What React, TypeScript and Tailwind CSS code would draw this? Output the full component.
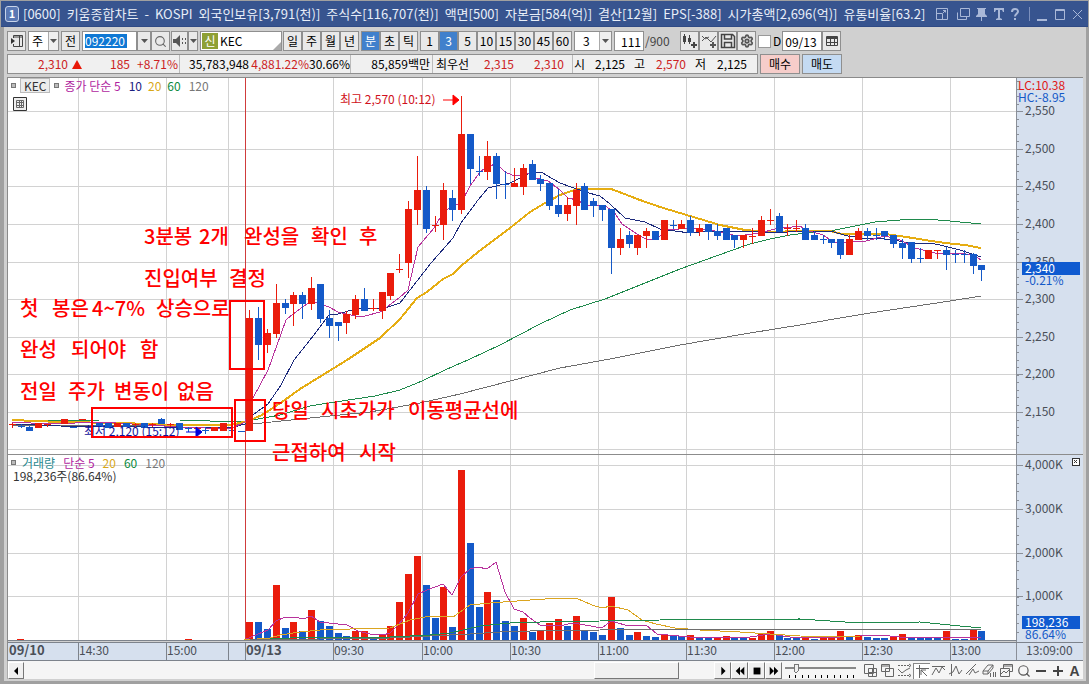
import React from 'react';
import { Search, Settings } from 'lucide-react';

type Point = [number, number];
type Candle = ['r' | 'b', number, number, number, number];

const RED = '#ea1c0c';
const BLUE = '#1459c8';

const titleParts = [
  '[0600]',
  '키움종합차트',
  '-',
  'KOSPI',
  '외국인보유[3,791(천)]',
  '주식수[116,707(천)]',
  '액면[500]',
  '자본금[584(억)]',
  '결산[12월]',
  'EPS[-388]',
  '시가총액[2,696(억)]',
  '유통비율[63.2]',
];

// [colour, high, body top, body bottom, low], one per 3 minutes from 09:00
const candles: Candle[] = [
  ['r', 310, 318, 431, 431], ['b', 307, 318, 345, 360], ['r', 329, 333, 345, 353], ['r', 284, 303, 334, 338],
  ['b', 299, 303, 308, 314], ['r', 292, 295, 304, 326], ['b', 292, 295, 304, 319], ['r', 277, 288, 304, 310],
  ['b', 284, 284, 319, 323], ['b', 310, 318, 326, 338], ['b', 322, 322, 326, 341], ['r', 311, 314, 323, 334],
  ['r', 295, 299, 315, 319], ['b', 288, 299, 311, 311], ['r', 299, 308, 308, 311], ['r', 292, 292, 311, 319],
  ['r', 273, 273, 296, 300], ['r', 254, 269, 269, 273], ['r', 201, 209, 263, 278], ['r', 156, 190, 210, 225],
  ['b', 186, 190, 229, 233], ['r', 216, 225, 225, 232], ['r', 183, 190, 225, 240], ['b', 190, 198, 210, 221],
  ['r', 96, 134, 210, 214], ['b', 134, 134, 169, 184], ['b', 156, 171, 171, 176], ['r', 141, 156, 172, 180],
  ['b', 153, 156, 184, 199], ['b', 171, 184, 184, 199], ['r', 168, 183, 187, 187], ['r', 164, 168, 187, 195],
  ['b', 160, 164, 180, 180], ['b', 175, 179, 184, 191], ['b', 183, 183, 206, 210], ['b', 189, 205, 214, 217],
  ['r', 197, 205, 214, 221], ['r', 183, 190, 206, 225], ['b', 183, 186, 210, 210], ['b', 198, 201, 206, 217],
  ['b', 205, 205, 210, 221], ['b', 209, 209, 248, 274], ['r', 228, 239, 248, 255], ['b', 231, 235, 244, 248],
  ['r', 235, 235, 248, 255], ['r', 228, 231, 236, 248], ['b', 231, 231, 240, 240], ['r', 220, 220, 240, 240],
  ['b', 220, 225, 225, 229], ['r', 220, 224, 229, 229], ['b', 216, 220, 233, 236], ['r', 224, 228, 232, 236],
  ['b', 224, 224, 232, 240], ['b', 224, 231, 236, 240], ['b', 228, 228, 240, 240], ['b', 235, 235, 240, 248],
  ['r', 235, 235, 240, 248], ['r', 228, 236, 236, 244], ['r', 216, 220, 236, 236], ['r', 209, 220, 220, 225],
  ['b', 213, 216, 232, 232], ['r', 224, 228, 228, 236], ['r', 220, 228, 228, 232], ['b', 224, 228, 240, 240],
  ['b', 231, 235, 240, 240], ['b', 235, 239, 239, 244], ['b', 239, 239, 243, 248], ['b', 239, 239, 255, 259],
  ['r', 235, 239, 255, 255], ['r', 228, 231, 240, 240], ['b', 228, 231, 236, 240], ['b', 228, 235, 235, 240],
  ['b', 231, 231, 236, 240], ['b', 235, 235, 244, 248], ['b', 239, 243, 248, 259], ['b', 242, 242, 259, 263],
  ['b', 248, 258, 258, 263], ['r', 250, 250, 259, 259], ['r', 250, 250, 250, 259], ['b', 247, 250, 255, 270],
  ['b', 250, 254, 254, 263], ['b', 250, 254, 254, 263], ['b', 253, 254, 266, 274], ['b', 265, 265, 270, 281],
];

// previous session, x then the same fields
const priorCandles: [number, Candle][] = [
  [12, ['r', 423, 424, 424, 428]], [21, ['b', 424, 426, 426, 428]], [29, ['b', 426, 427, 431, 431]],
  [38, ['r', 423, 423, 428, 428]], [47, ['r', 424, 424, 424, 427]], [64, ['r', 419, 419, 424, 424]],
  [73, ['b', 427, 427, 427, 427]], [82, ['r', 419, 419, 419, 419]], [99, ['b', 423, 423, 427, 427]],
  [108, ['b', 423, 423, 428, 428]], [117, ['r', 423, 423, 427, 427]], [126, ['b', 423, 423, 427, 427]],
  [135, ['r', 423, 424, 424, 427]], [144, ['b', 423, 423, 428, 428]], [152, ['r', 423, 424, 424, 427]],
  [161, ['b', 418, 419, 424, 424]], [170, ['r', 423, 424, 424, 427]], [179, ['b', 423, 423, 430, 430]],
  [188, ['b', 427, 428, 428, 432]], [197, ['r', 427, 428, 428, 431]], [205, ['b', 427, 430, 430, 434]],
  [214, ['r', 427, 427, 431, 431]], [223, ['r', 423, 423, 431, 431]], [232, ['b', 430, 430, 430, 430]],
  [241, ['b', 431, 431, 431, 431]],
];

const volumeTops = [
  622, 622, 629, 585, 628, 622, 631, 610, 621, 626, 633, 636, 631, 631, 638, 635, 626, 602, 574, 556, 585, 618, 587,
  627, 470, 543, 607, 592, 600, 621, 626, 618, 632, 630, 623, 619, 626, 616, 630, 632, 635, 597, 628, 635, 632, 636,
  637, 634, 635, 636, 635, 638, 638, 637, 636, 638, 638, 638, 634, 631, 635, 638, 638, 636, 639, 638, 638, 631, 637,
  635, 637, 638, 638, 637, 634, 637, 637, 637, 638, 631, 639, 639, 630, 631,
];
const volumeColors =
  'rbbrbrbrbbbbrrbrrrrrbbrbrbbrbbbrb' + 'rrrbrbbbrbbrbbrbbrbbrrbbrrrbbbrbrrrbrbbbrrbbbbrbbrb';

const priceLines: { color: string; width: number; points: Point[] }[] = [
  {
    color: '#6e6e6e',
    width: 1,
    points: [[12, 425], [230, 425], [262, 423], [310, 418], [370, 412], [420, 403], [460, 394], [510, 381], [560, 368], [610, 359], [680, 345], [750, 333], [800, 325], [834, 319], [870, 313], [910, 307], [950, 301], [981, 296]],
  },
  {
    color: '#1f8a4c',
    width: 1,
    points: [[12, 421], [100, 420], [180, 420], [240, 422], [258, 419], [280, 415], [310, 406], [335, 402], [375, 396], [400, 390], [422, 381], [445, 370], [470, 359], [500, 345], [540, 324], [570, 310], [605, 299], [640, 285], [680, 269], [705, 260], [730, 251], [750, 244], [770, 239], [790, 235], [815, 232], [830, 231], [855, 226], [875, 222], [900, 220], [925, 219], [950, 221], [981, 224]],
  },
  {
    color: '#e6ad12',
    width: 2,
    points: [[12, 420], [60, 422], [120, 423], [180, 425], [230, 425], [248, 421], [262, 415], [282, 402], [300, 389], [347, 360], [380, 338], [400, 319], [417, 298], [427, 292], [443, 279], [453, 274], [461, 266], [478, 252], [510, 228], [530, 212], [545, 203], [560, 195], [577, 189], [611, 189], [627, 195], [640, 200], [660, 207], [680, 213], [700, 219], [720, 225], [745, 230], [770, 232], [800, 231], [830, 231], [842, 234], [885, 234], [900, 236], [925, 240], [945, 243], [965, 245], [981, 248]],
  },
  {
    color: '#1c2a7c',
    width: 1,
    points: [[10, 424], [60, 426], [230, 428], [245, 424], [254, 414], [268, 404], [281, 385], [294, 360], [310, 340], [329, 315], [338, 314], [355, 309], [385, 308], [400, 303], [417, 281], [431, 263], [453, 238], [461, 223], [478, 200], [488, 188], [500, 185], [510, 183], [520, 178], [532, 172], [541, 172], [560, 183], [585, 192], [600, 196], [610, 204], [625, 218], [645, 222], [660, 229], [690, 233], [710, 231], [750, 231], [775, 233], [800, 231], [830, 231], [848, 236], [862, 238], [885, 239], [895, 240], [908, 243], [920, 244], [930, 243], [940, 245], [960, 250], [981, 257]],
  },
  {
    color: '#b8329c',
    width: 1,
    points: [[12, 422], [50, 424], [100, 422], [180, 427], [230, 429], [245, 422], [253, 398], [268, 370], [286, 320], [293, 314], [311, 301], [329, 307], [338, 312], [355, 316], [365, 316], [380, 312], [399, 298], [408, 290], [418, 247], [434, 228], [443, 213], [452, 206], [461, 203], [470, 186], [480, 172], [488, 166], [497, 164], [505, 172], [512, 175], [520, 176], [528, 173], [536, 178], [548, 181], [560, 190], [568, 198], [577, 200], [586, 205], [604, 205], [614, 212], [622, 224], [640, 236], [648, 240], [657, 238], [668, 230], [690, 228], [710, 230], [738, 236], [760, 233], [775, 229], [800, 226], [806, 230], [823, 235], [835, 243], [850, 242], [866, 241], [885, 236], [900, 240], [915, 248], [935, 253], [962, 253], [975, 256], [981, 260]],
  },
];

const volumeLines: { color: string; points: Point[] }[] = [
  {
    color: '#b8329c',
    points: [[244, 640], [258, 634], [268, 630], [276, 621], [285, 617], [295, 617], [303, 619], [311, 616], [320, 622], [347, 625], [358, 631], [370, 634], [383, 635], [390, 633], [398, 625], [408, 613], [418, 594], [427, 590], [443, 584], [452, 595], [461, 577], [470, 569], [478, 567], [487, 569], [496, 562], [505, 592], [514, 609], [523, 612], [530, 618], [540, 625], [560, 626], [572, 623], [585, 625], [602, 628], [611, 621], [625, 625], [646, 625], [657, 634], [690, 637], [750, 637], [770, 634], [790, 637], [820, 638], [860, 636], [880, 635], [900, 637], [981, 637]],
  },
  {
    color: '#dba520',
    points: [[244, 640], [270, 638], [280, 635], [300, 632], [320, 630], [350, 629], [390, 628], [410, 620], [430, 616], [453, 617], [470, 605], [490, 603], [530, 600], [545, 599], [576, 598], [592, 605], [602, 608], [611, 606], [628, 610], [642, 620], [656, 624], [675, 628], [700, 630], [740, 632], [770, 634], [800, 636], [860, 637], [981, 637]],
  },
  {
    color: '#1f8a4c',
    points: [[250, 640], [310, 637], [390, 637], [430, 635], [450, 633], [480, 626], [510, 623], [540, 622], [600, 621], [660, 620], [800, 619], [830, 621], [860, 623], [920, 622], [950, 625], [981, 628]],
  },
  {
    color: '#6e6e6e',
    points: [[250, 640], [390, 638], [430, 636], [470, 634], [500, 632], [530, 631], [600, 630], [760, 629], [981, 629]],
  },
];

const priceTicks: [string, number][] = [
  ['2,550', 111], ['2,500', 149], ['2,450', 186], ['2,400', 224], ['2,350', 262],
  ['2,300', 299], ['2,250', 337], ['2,200', 374], ['2,150', 412],
];
const volumeTicks: [string, number][] = [['4,000K', 465], ['3,000K', 509], ['2,000K', 553], ['1,000K', 596]];
const timeTicks: [string, number][] = [
  ['14:30', 78], ['15:00', 166], ['', 228], ['09/13', 245], ['09:30', 333], ['10:00', 422], ['10:30', 510],
  ['11:00', 598], ['11:30', 686], ['12:00', 774], ['12:30', 862], ['13:00', 950],
];

// baseline, then each word with its x
const notes: [number, [string, number][]][] = [
  [244, [['3분봉', 144], ['2개', 199], ['완성을', 244], ['확인', 311], ['후', 359]]],
  [286, [['진입여부', 144], ['결정', 229]]],
  [316, [['첫', 20], ['봉은', 52], ['4~7%', 92], ['상승으로', 156]]],
  [357, [['완성', 20], ['되어야', 71], ['함', 140]]],
  [399, [['전일', 20], ['주가', 68], ['변동이', 114], ['없음', 177]]],
  [418, [['당일', 272], ['시초가가', 321], ['이동평균선에', 408]]],
  [460, [['근접하여', 272], ['시작', 359]]],
];

const toPath = (points: Point[]) => points.map((p) => p.join(',')).join(' ');
const barX = (i: number) => Math.round(249.3 + i * 8.82);

function CandleMark({ x, candle }: { x: number; candle: Candle }) {
  const [kind, high, top, bottom, low] = candle;
  const fill = kind === 'r' ? RED : BLUE;
  return (
    <g fill={fill}>
      <rect x={x} y={high} width={1} height={Math.max(1, low - high)} />
      <rect x={x - 3} y={top} width={7} height={Math.max(1, bottom - top)} />
    </g>
  );
}

function ChartCanvas() {
  return (
    <svg id="chart" viewBox="8 78 1075 583" className="block w-full" shapeRendering="crispEdges">
      <rect x={8} y={78} width={1009} height={563} fill="#fff" />
      <rect x={1017} y={78} width={66} height={583} fill="#d6e0ee" />
      <rect x={8} y={642} width={1075} height={18} fill="#d6e0ee" />

      {/* Grid */}
      <g fill="#d2d2d2">
        {[...priceTicks, ['', 449] as [string, number], ...volumeTicks].map(([, y]) => (
          <rect key={y} x={8} y={y} width={1008} height={1} />
        ))}
        {timeTicks.map(([, x]) => (
          <rect key={x} x={x} y={78} width={1} height={563} />
        ))}
      </g>
      <rect x={8} y={454} width={1075} height={1} fill="#8c8c8c" />
      <rect x={245} y={78} width={1} height={563} fill="#d03c3c" />
      <rect x={1016} y={78} width={1} height={583} fill="#8a8f98" />

      {/* Axis ticks */}
      <g fill="#8a8f98">
        {Array.from({ length: 49 }, (_, i) => (
          <rect key={i} x={1017} y={Math.round(81 + i * 7.53)} width={2} height={1} />
        ))}
        {Array.from({ length: 20 }, (_, i) => (
          <rect key={i} x={1017} y={Math.round(465 + i * 8.77)} width={2} height={1} />
        ))}
        {[...priceTicks, ...volumeTicks].map(([, y]) => (
          <rect key={y} x={1017} y={y} width={6} height={1} />
        ))}
      </g>

      {/* Volume bars */}
      {volumeTops.map((y, i) => (
        <rect key={i} x={barX(i) - 3} y={y} width={7} height={641 - y} fill={volumeColors[i] === 'r' ? RED : BLUE} />
      ))}
      {volumeLines.map((line) => (
        <polyline key={line.color} points={toPath(line.points)} fill="none" stroke={line.color} />
      ))}

      {/* Price candles */}
      {priceLines.map((line) => (
        <polyline key={line.color} points={toPath(line.points)} fill="none" stroke={line.color} strokeWidth={line.width} />
      ))}
      {priorCandles.map(([x, candle]) => (
        <CandleMark key={x} x={x} candle={candle} />
      ))}
      {candles.map((candle, i) => (
        <CandleMark key={i} x={barX(i)} candle={candle} />
      ))}

      {/* Time axis */}
      <g fill="#7d838c">
        <rect x={8} y={640} width={1009} height={1} />
        <rect x={8} y={642} width={1075} height={1} />
        <rect x={8} y={660} width={1075} height={1} />
        {timeTicks.map(([, x]) => (
          <rect key={x} x={x} y={642} width={1} height={18} />
        ))}
      </g>
      <rect x={17} y={639} width={7} height={1} fill={RED} />
      <rect x={185} y={639} width={7} height={1} fill={RED} />
      <g fontSize={12} fill="#4a4f58">
        <text x={9} y={655} fontSize={13} fontWeight={700}>09/10</text>
        {timeTicks.map(([label, x]) =>
          label === '09/13' ? (
            <text key={x} x={x + 1} y={655} fontSize={13} fontWeight={700}>{label}</text>
          ) : (
            <text key={x} x={x + 1} y={655}>{label}</text>
          ),
        )}
        <text x={1026} y={655}>13:09:00</text>
        {[...priceTicks, ...volumeTicks].map(([label, y]) => (
          <text key={y} x={1025} y={y + 4}>{label}</text>
        ))}
      </g>

      {/* Current values */}
      <g fontSize={12}>
        <text x={1018} y={90} fill="#e01818">LC:10.38</text>
        <text x={1018} y={102} fill={BLUE}>HC:-8.95</text>
        <rect x={1022} y={262} width={58} height={13} fill="#0f5ad0" />
        <text x={1025} y={273} fill="#fff">2,340</text>
        <text x={1025} y={285} fill={BLUE}>-0.21%</text>
        <rect x={1022} y={616} width={58} height={13} fill="#0f5ad0" />
        <text x={1025} y={627} fill="#fff">198,236</text>
        <text x={1025} y={639} fill={BLUE}>86.64%</text>
      </g>
      <rect x={1072} y={458} width={7} height={7} fill="#fff" stroke="#333" />
      <path d="M1074 460l3 3M1077 460l-3 3" stroke="#333" shapeRendering="auto" />

      {/* High / low markers */}
      <g fontSize={12}>
        <text x={340} y={104} fill="#d01020">최고 2,570 (10:12)</text>
        <text x={84} y={436} fill="#10109a">최저 2,120 (15:12)</text>
      </g>
      <path d="M443 100h10v-5l6 5-6 5v-5" fill="#f00" stroke="#f00" shapeRendering="auto" />
      <path d="M186 432h10v-5l6 5-6 5v-5" fill="#00d" stroke="#00d" shapeRendering="auto" />

      {/* Hand notes */}
      <g fill="none" stroke="#f00" strokeWidth={2}>
        <rect x={230} y={301} width={34} height={68} />
        <rect x={92} y={408} width={140} height={29} />
        <rect x={235} y={400} width={30} height={41} />
      </g>
      <g fill="#f00" fontSize={20} fontWeight={500}>
        {notes.map(([y, words]) => (
          <text key={y} y={y}>
            {words.map(([word, x]) => (
              <tspan key={x} x={x}>{word} </tspan>
            ))}
          </text>
        ))}
      </g>
    </svg>
  );
}

function Caret() {
  return (
    <svg viewBox="0 0 7 4" className="h-1 w-[7px]">
      <path d="M0 0h7L3.500 4z" fill="#555" />
    </svg>
  );
}

function ToolButton({ children, active, width = 'w-[19px]', label }: { children: React.ReactNode; active?: boolean; width?: string; label?: string }) {
  return (
    <button
      aria-label={label}
      className={`flex h-5 shrink-0 items-center justify-center border border-[#8f8f8f] ${width} ${
        active ? 'bg-[#4080cc] text-white' : 'bg-[#e9e9e9] text-black'
      }`}
    >
      {children}
    </button>
  );
}

function TitleBar() {
  return (
    <header className="flex h-[26px] items-center border-b border-[#2f4a85] bg-[#37548f] pl-1 pr-1 text-[#e8eef8]">
      <span className="flex h-4 w-[14px] shrink-0 items-center justify-center rounded-[3px] border border-[#c8d4ea] bg-[#5a78b4] text-[11px] font-bold text-white">
        1
      </span>
      <h1 className="ml-1 flex flex-1 gap-1.5 whitespace-nowrap text-[13px] leading-5">
        {titleParts.map((part) => (
          <span key={part}>{part}</span>
        ))}
      </h1>
      <svg viewBox="0 0 150 18" className="h-[18px] w-[150px] shrink-0" fill="none" stroke="#a9b8d8">
        <path d="M2.500 3.500h11v11h-11zM2.500 8.500h6v6M9 8l3-3M9 5.500h2.500v2" />
        <path d="M26.500 3.500h9v8h-9zM23.500 7.500v7h9v-3" />
        <path d="M43 3h9v1h-1v5l2 2v1h-5v4h-1v-4h-5v-1l2-2V4h-1z" fill="#a9b8d8" stroke="none" />
        <path d="M60 3h10v4h-1l-1-2h-2v8l2 1v1h-6v-1l2-1V5h-2l-1 2h-1z" fill="#a9b8d8" stroke="none" />
        <path d="M78 7c0-4 6-4 6-.5 0 2-3 2.500-3 5M81 13v2" strokeWidth="2" />
        <path d="M95.500 2v14" stroke="#7c90bd" />
        <path d="M103 15h10" strokeWidth="2" />
        <path d="M121.500 4.500h9v10h-9zM121 5.500h10" />
        <path d="M139 5l9 9M148 5l-9 9" />
      </svg>
    </header>
  );
}

function ChartToolbar() {
  return (
    <div className="flex h-5 items-center text-xs leading-4">
      <ToolButton label="패널">
        <svg viewBox="0 0 14 14" className="size-3.5" fill="none" stroke="#444">
          <path d="M3.500 4V1.500h9v11h-9V10M9.500 2v10M3 3h10" />
          <path d="M1 4l4 3-4 3z" fill="#333" stroke="none" />
        </svg>
      </ToolButton>
      <div className="ml-0.5 flex h-5 w-[31px] border border-[#8f8f8f] bg-white">
        <select aria-label="종목 구분" className="w-[19px] appearance-none pl-[3px]">
          <option>주</option>
        </select>
        <span className="flex flex-1 items-center justify-center border-l border-[#aaa] bg-[#efefef]"><Caret /></span>
      </div>
      <div className="ml-0.5"><ToolButton>전</ToolButton></div>
      <div className="ml-0.5 flex h-5 w-[55px] items-center border border-[#8f8f8f] bg-white pl-0.5">
        <input aria-label="종목코드" defaultValue="092220" className="h-[14px] w-[42px] bg-[#0f78d4] text-white" />
      </div>
      <ToolButton label="코드 목록" width="w-[14px]"><Caret /></ToolButton>
      <ToolButton label="검색"><Search size={13} color="#666" /></ToolButton>
      <div className="ml-px flex">
        <ToolButton label="소리" width="w-[17px]">
          <svg viewBox="0 0 14 12" className="h-3 w-3.5" fill="#555">
            <path d="M0 4h3l4-4v12L3 8H0zM9 3h1v2H9zM9 7h1v2H9zM12 3h1v2h-1zM12 7h1v2h-1z" />
          </svg>
        </ToolButton>
        <ToolButton label="소리 설정" width="w-[10px]"><Caret /></ToolButton>
      </div>
      <div className="ml-0.5 flex h-5 w-[82px] items-center border border-[#8f8f8f] bg-white">
        <span className="ml-px flex size-4 items-center justify-center bg-[#8ea034] text-white">신</span>
        <input aria-label="종목명" defaultValue="KEC" className="ml-0.5 w-[50px]" />
        <svg viewBox="0 0 8 8" className="ml-auto mt-auto size-2"><path d="M8 0v8H0z" fill="#aaa" /></svg>
      </div>
      <div className="ml-px flex">
        {['일', '주', '월', '년'].map((t) => (
          <ToolButton key={t}>{t}</ToolButton>
        ))}
      </div>
      <div className="ml-0.5 flex">
        {['분', '초', '틱'].map((t) => (
          <ToolButton key={t} active={t === '분'}>{t}</ToolButton>
        ))}
      </div>
      <div className="ml-0.5 flex">
        {['1', '3', '5', '10', '15', '30', '45', '60'].map((t) => (
          <ToolButton key={t} active={t === '3'}>{t}</ToolButton>
        ))}
      </div>
      <div className="ml-0.5 flex h-5 w-[38px] border border-[#8f8f8f] bg-white">
        <select aria-label="주기" className="w-6 appearance-none pl-2">
          <option>3</option>
        </select>
        <span className="flex flex-1 items-center justify-center border-l border-[#aaa] bg-[#efefef]"><Caret /></span>
      </div>
      <input aria-label="조회 개수" defaultValue="111" className="ml-0.5 h-5 w-[30px] border border-[#8f8f8f] bg-white pr-0.5 text-right" />
      <span className="ml-px w-[34px] text-[#444]">/900</span>
      <div className="ml-px flex">
        <ToolButton label="봉 추가">
          <svg viewBox="0 0 16 16" className="size-4" fill="#444">
            <path d="M1 3h3v6H1zM2 1h1v10H2zM6 5h3v4H6zM7 2h1v9H7zM11 9h2v2h2v2h-2v2h-2v-2H9v-2h2z" />
          </svg>
        </ToolButton>
        <ToolButton label="지표 추가">
          <svg viewBox="0 0 16 16" className="size-4" fill="none" stroke="#555">
            <path d="M1 8l4-4 5 5 5-6M1 3l3 3 4-2" />
            <path d="M12 9v6M9 12h6" strokeWidth="2" />
          </svg>
        </ToolButton>
        <ToolButton label="저장">
          <svg viewBox="0 0 16 16" className="size-4" fill="none" stroke="#444" strokeWidth="1.500">
            <path d="M1.500 1.500h11l2 2v11h-13zM4.500 2v4h7V2M4.500 14V9.500h7V14" />
          </svg>
        </ToolButton>
        <ToolButton label="설정"><Settings size={14} color="#555" strokeWidth={3} /></ToolButton>
      </div>
      <label className="ml-0.5 flex items-center gap-0.5">
        <input type="checkbox" className="size-[13px] appearance-none border border-[#999] bg-white" />
        D
      </label>
      <input aria-label="날짜" defaultValue="09/13" className="ml-px h-5 w-10 border border-[#8f8f8f] bg-white pl-0.5" />
      <ToolButton label="달력">
        <svg viewBox="0 0 12 12" className="size-3" fill="none" stroke="#444">
          <path d="M.5 1.500h11v9H.5zM0 2.500h12M0 3.500h12M4.500 4v6M8.500 4v6M1 7.500h10" />
        </svg>
      </ToolButton>
    </div>
  );
}

function QuoteRow() {
  const up = 'text-[#cc2222]';
  return (
    <div className="mt-[3px] flex h-5 gap-0.5 text-xs leading-[18px]">
      <div className="flex w-[751px] items-center border border-[#8f8f8f] bg-[#f0f0f0] text-right">
        <span className={`w-[60px] ${up}`}>2,310</span>
        <svg viewBox="0 0 10 9" className="ml-1 h-[9px] w-2.5"><path d="M5 0l5 9H0z" fill="#e81808" /></svg>
        <span className={`w-12 ${up}`}>185</span>
        <span className={`w-12 ${up}`}>+8.71%</span>
        <span className="ml-px w-[70px] border-l border-[#bbb]">35,783,948</span>
        <span className={`w-[60px] ${up}`}>4,881.22%</span>
        <span className="w-10">30.66%</span>
        <span className="ml-px w-[80px] border-l border-[#bbb]">85,859백만</span>
        <span className="ml-0.5 w-[37px] border-l border-[#bbb]">최우선</span>
        <span className={`w-[45px] ${up}`}>2,315</span>
        <span className={`w-[50px] ${up}`}>2,310</span>
        <span className="ml-2 w-[13px] border-l border-[#bbb]">시</span>
        <span className="w-10">2,125</span>
        <span className="w-5">고</span>
        <span className={`w-[41px] ${up}`}>2,570</span>
        <span className="w-5">저</span>
        <span className="w-[41px]">2,125</span>
      </div>
      <button className="w-10 border border-[#8f8f8f] bg-[#f6cdca]">매수</button>
      <button className="w-10 border border-[#8f8f8f] bg-[#c4daf2]">매도</button>
    </div>
  );
}

function Marker() {
  return <span className="size-[5px] border border-[#777] bg-[#bbb]" />;
}

function ChartArea() {
  return (
    <section className="relative mt-[3px] border-l border-t border-[#8a8a8a]">
      <ChartCanvas />
      <div className="absolute left-[3px] top-0 flex items-center gap-1 text-xs leading-[13px]">
        <Marker />
        <span className="border border-[#bbb] bg-[#ececec] px-[3px] text-[#333]">KEC</span>
        <Marker />
        <span className="ml-px text-[#b01fa0]">종가 단순 5</span>
        <span className="ml-1 text-[#1a2080]">10</span>
        <span className="ml-0.5 text-[#d8a818]">20</span>
        <span className="ml-0.5 text-[#0b8a3c]">60</span>
        <span className="ml-1 text-[#777]">120</span>
      </div>
      <svg viewBox="0 0 14 14" className="absolute left-[5px] top-[19px] size-3.5" fill="#eee" stroke="#333">
        <path d="M.5.5h13v13H.5z" />
        <path d="M3.500 3.500h7v7h-7zM3 5.500h8M3 8.500h8M6.500 3v8M8.500 3v8" stroke="#666" />
      </svg>
      <div className="absolute left-[3px] top-[378px] text-xs leading-[13px]">
        <div className="flex items-center gap-1">
          <Marker />
          <span className="ml-0.5 text-[#2a8a90]">거래량</span>
          <span className="ml-1 text-[#b01fa0]">단순 5</span>
          <span className="ml-1 text-[#d8a818]">20</span>
          <span className="ml-1 text-[#0b8a3c]">60</span>
          <span className="ml-1 text-[#777]">120</span>
        </div>
        <div className="pl-0.5 text-[#333]">198,236주(86.64%)</div>
      </div>
    </section>
  );
}

const playButtons: [string, string][] = [
  ['재생', 'M5 2l5 5-5 5z'],
  ['뒤로', 'M7 2v10L2 7zM12 2v10L7 7z'],
  ['정지', 'M3 3h8v8H3z'],
  ['앞으로', 'M2 2v10l5-5zM7 2v10l5-5z'],
];

const drawTools: [string, string][] = [
  ['창 추가', 'M1.500 1.500h9v9h-9zM5.500 5.500h8v8h-8zM9.500 6v7M6 9.500h7'],
  ['창 겹침', 'M1.500 1.500h8v7h-8zM5.500 5.500h8v8h-8zM2 3h7'],
  ['추세선', 'M1 2.500h2m1 0h2m1 0h2m1 0h2M12 1l2 1.500-2 1.500M1 6l4 4 4-3 4-2M1 12.500h2m1 0h2m1 0h2m1 0h2M12 11l2 1.500-2 1.500'],
  ['십자선', 'M4.500 1v13M1 4.500h13M6 6l6 6M6 6v5M6 6h5'],
  ['고점', 'M1 3.500h13M1 12l4-7 3 5 3-6 3 3'],
  ['저점', 'M3.500 1v12M1 11l4-2 3-6 3 8 3-4'],
  ['기울기', 'M1 11L11 1M4 12l4-6 2 4 4-2'],
  ['모두 지우기', 'M1 8l5-6h5L6 8zM1 8v3h5V8M6 11l5-6V2M8.500 10v4M11.500 9v5M13.500 9v5'],
  ['그림 저장', 'M4.500 1.500h9v7h-3M4.500 5V1.500M4 3h9M1.500 5.500h9v8h-9zM2 11l3-3 2 2 3-3'],
];

function BottomBar() {
  const bevel = 'border border-b-[#777] border-l-white border-r-[#777] border-t-white bg-[#f0f0f0]';
  return (
    <footer className="flex h-[18px] items-center border-l border-[#aaa] bg-[#f5f5f5] pt-px">
      <button aria-label="왼쪽으로" className={`flex h-[17px] w-4 items-center justify-center ${bevel}`}>
        <svg viewBox="0 0 6 8" className="h-2 w-1.5"><path d="M5 0v8L1 4z" /></svg>
      </button>
      <div className="flex h-[17px] flex-1 justify-end pr-[35px]">
        <div role="scrollbar" aria-controls="chart" aria-valuenow={94} className={`h-[17px] w-[85px] ${bevel}`} />
      </div>
      {playButtons.map(([label, d]) => (
        <button key={label} aria-label={label} className={`flex h-[17px] w-[17px] items-center justify-center ${bevel}`}>
          <svg viewBox="0 0 14 14" className="size-3"><path d={d} /></svg>
        </button>
      ))}
      <div className="relative ml-[3px] h-[17px] w-[71px]">
        <svg viewBox="0 0 71 17" className="block h-[17px] w-[71px]" shapeRendering="crispEdges">
          <rect y="5" width="71" height="2" fill="#888" />
          {Array.from({ length: 11 }, (_, i) => (
            <rect key={i} x={4 + Math.round(i * 6.4)} y="13" width="1" height="3" />
          ))}
          <path d="M9 2h4v7l-2 2-2-2z" fill="#f0f0f0" stroke="#777" />
        </svg>
        <input type="range" aria-label="속도" defaultValue={14} className="absolute inset-0 w-full opacity-0" />
      </div>
      <div className="ml-1.5 flex">
        {drawTools.map(([label, d]) => (
          <button
            key={label}
            aria-label={label}
            className={`flex h-4 w-[17px] items-center justify-center ${label === '십자선' ? 'border-l border-t border-[#888] bg-white' : ''}`}
          >
            <svg viewBox="0 0 15 15" className="size-[15px] shrink-0" fill="none" stroke="#666"><path d={d} /></svg>
          </button>
        ))}
        <button aria-label="돋보기" className="flex h-4 w-[17px] items-center justify-center"><Search size={14} color="#555" /></button>
        <button aria-label="축소" className="flex h-4 w-[17px] items-center justify-center">
          <svg viewBox="0 0 10 10" className="size-2.5"><path d="M0 4h10v2H0z" fill="#444" /></svg>
        </button>
        <button aria-label="확대" className="flex h-4 w-[17px] items-center justify-center">
          <svg viewBox="0 0 10 10" className="size-2.5"><path d="M4 0h2v4h4v2H6v4H4V6H0V4h4z" fill="#444" /></svg>
        </button>
        <button className="h-4 w-[17px] font-['Liberation_Sans',sans-serif] text-[14px] font-bold leading-4 text-[#444]">A</button>
      </div>
    </footer>
  );
}

export default function App() {
  return (
    <div className="min-h-screen bg-[#a0a0a0] px-px pt-px font-['Noto_Sans_CJK_KR',sans-serif]">
      <TitleBar />
      <main className="border-l-[3px] border-r-2 border-[#a0a0a0] bg-[#d0d0d0] px-[3px] pb-0.5 pt-1">
        <ChartToolbar />
        <QuoteRow />
        <ChartArea />
        <BottomBar />
      </main>
    </div>
  );
}
